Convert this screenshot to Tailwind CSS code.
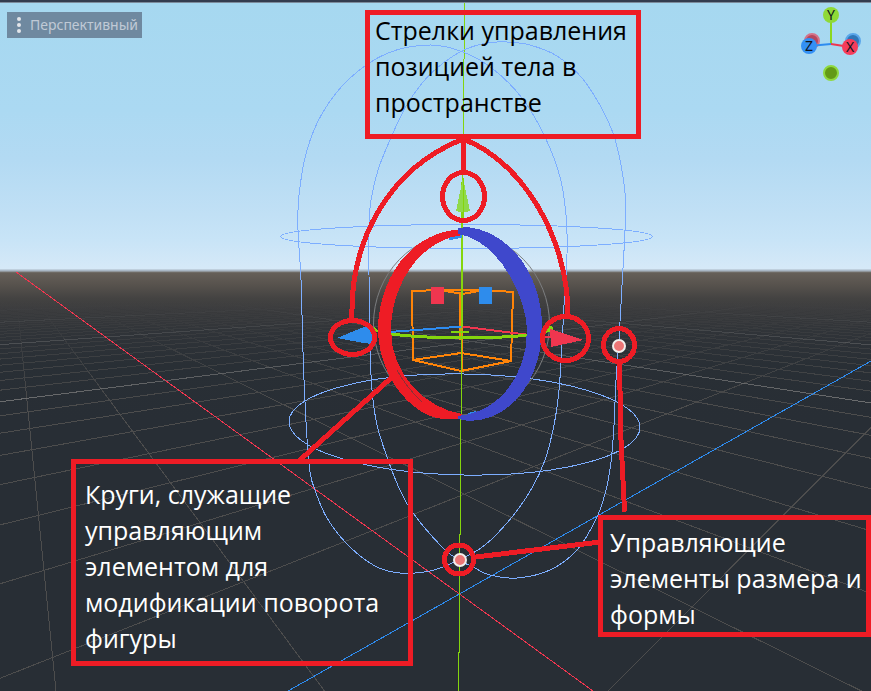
<!DOCTYPE html>
<html lang="ru">
<head>
<meta charset="utf-8">
<title>3D-вид</title>
<script src="https://cdn.jsdelivr.net/npm/@tailwindcss/browser@4"></script>
</head>
<body class="bg-[#282e35]">
<main class="relative min-h-screen w-full overflow-hidden bg-[linear-gradient(to_bottom,#333c4e_0px,#333c4e_2px,#7d8c9c_2px,#7d8c9c_3px,#a6d8f0_3px,#abd9f2_110px,#b3daf3_160px,#c1e0f5_215px,#c8e4f7_240px,#d6e9f8_269px,#a9b7c4_270px,#a9b7c4_271px,#777571_272px,#655f58_273px,#57524d_285px,#444342_298px,#393a3c_311px,#2f3338_335px,#292f35_365px,#282e35_420px)]">
  <svg class="absolute inset-0 h-full w-full" aria-hidden="true" fill="none">
    <defs>
      <linearGradient id="minor" gradientUnits="userSpaceOnUse" x1="0" y1="300" x2="0" y2="410">
        <stop offset="0" stop-color="#4d4d4d" stop-opacity="0"/>
        <stop offset="0.4" stop-color="#4d4d4d" stop-opacity="0.4"/>
        <stop offset="1" stop-color="#4d4d4d"/>
      </linearGradient>
      <linearGradient id="major" gradientUnits="userSpaceOnUse" x1="0" y1="304" x2="0" y2="410">
        <stop offset="0" stop-color="#707172" stop-opacity="0"/>
        <stop offset="0.4" stop-color="#707172" stop-opacity="0.5"/>
        <stop offset="1" stop-color="#707172"/>
      </linearGradient>
    </defs>
    <g shape-rendering="crispEdges">
      <path id="gridMinor" stroke="url(#minor)"/>
      <path id="gridMajor" stroke="url(#major)"/>
      <path d="M16 272L593 691" stroke="#f0364f"/>
      <path d="M871 361L288 691" stroke="#2e8cf0"/>
      <path d="M464.500 3V58L463.500 60V137L462.500 180M460.500 418V534L459.500 535V652L458.500 653V691" stroke="#84d50d"/>
    </g>
    <g stroke="#7daeff" shape-rendering="crispEdges">
      <path data-closed="1" data-points="299,195 307,150 323,112 350,78 388,53 430,45 463,52 493,69 522,98 545,137 560,177 566,215 567,255 564,305 562,345 559,390 554,425 545,460 532,488 512,517 485,545 459,560 430,571 400,573 375,566 348,545 327,518 315,490 309,464 304,380 301,280 298,230"/>
      <path data-closed="1" data-points="369,225 371,200 378,170 390,140 405,108 423,82 442,64 464,50 487,43 507,42 530,45 557,56 582,78 601,107 613,133 620,160 625,193 625,230 622,285 619,340 616,380 614,425 611,462 606,490 597,517 577,550 550,570 517,578 490,575 473,567 459,560 443,548 413,513 400,490 388,460 377,425 372,390 370,347 369,275"/>
      <ellipse cx="466.500" cy="236.500" rx="186" ry="12"/>
      <ellipse cx="464.500" cy="424.500" rx="175.500" ry="50.500" transform="rotate(1 464 424)"/>
    </g>
    <ellipse cx="461.500" cy="324" rx="88" ry="91" stroke="#7c7e80"/>
    <g shape-rendering="crispEdges">
      <g stroke="#ff8408" stroke-width="2">
        <path d="M412 291L440 290L462 294L485 290L513 292L511 361L461 371L413 360ZM440 290H485M413 360L461 353L511 361M462 294V371"/>
        <path d="M461 292V340" stroke-width="4"/>
      </g>
      <path d="M390 332L462 326.500" stroke="#2e8cf0" stroke-width="2"/>
      <path d="M462 326.500L530 335" stroke="#f0364f" stroke-width="2"/>
      <path d="M390 334C430 339 490 339 530 335" stroke="#84d50d" stroke-width="3"/>
      <path d="M451 332H469M374 328L378 332M544 333L552 329" stroke="#84d50d" stroke-width="2"/>
      <circle cx="550" cy="329" r="3" fill="#84d50d"/>
      <path d="M462 182V327" stroke="#84d50d" stroke-width="2"/>
      <path d="M461.500 327V418" stroke="#84d50d"/>
      <path d="M463 178L456 211Q463 213 470 211Z" fill="#90da4a"/>
      <path d="M463 178V222" stroke="#84d50d"/>
      <path d="M337 338L364 327H372V344L364 343Z" fill="#2e8cec"/>
      <path d="M550 329L583 340L551 347Z" fill="#f0364f"/>
      <path d="M544 337H551" stroke="#f0364f" stroke-width="2"/>
      <path d="M431 287h13v17h-13z" fill="#f0364f"/>
      <path d="M479 287h13v17h-13z" fill="#2e8cec"/>
      <path d="M449 239L462 236" stroke="#2e8cec" stroke-width="3"/>
      <path d="M468 414L476 412" stroke="#2e8cec" stroke-width="2"/>
      <path fill="#ee1c25" d="M463 229C405 232 378 285 378 330C379 380 415 419 446 419H462V414C425 408 391 375 391 330C391 285 420 240 462 235Z"/>
      <path fill="#3f48cc" d="M458 228L468 227C510 232 542 275 542 327C542 375 515 421 468 421L458 419V416C500 412 527 375 527 330C527 300 500 240 458 234Z"/>
      <path d="M397 370Q406 387 422 402" stroke="#8e3035"/>
    </g>
    <g stroke="#ee1c25" stroke-width="5" stroke-linecap="round" shape-rendering="crispEdges">
      <path d="M463 139C385 170 350 245 352 318M463 139C520 160 568 235 568 315"/>
      <path d="M463.500 138V172M391 378L300 460M619.500 364L621 440L624.500 510M476 557L600 542"/>
      <ellipse cx="463.500" cy="196.500" rx="21" ry="24"/>
      <ellipse cx="352.500" cy="337.500" rx="22" ry="17"/>
      <ellipse cx="565.500" cy="338.500" rx="23" ry="22"/>
      <ellipse cx="619" cy="345" rx="15.500" ry="16.500"/>
      <ellipse cx="459" cy="559.500" rx="14.500" ry="14.500"/>
    </g>
    <g fill="#ec7676" stroke="#f0eeec" stroke-width="2">
      <circle cx="619" cy="346" r="6"/>
      <circle cx="460" cy="560" r="6"/>
    </g>
    <g stroke-width="2">
      <circle cx="812" cy="41" r="7" fill="#b5475e" stroke="#d57389"/>
      <circle cx="853" cy="41" r="7" fill="#2f76b7" stroke="#5aa6ea"/>
      <path d="M831 44V22" stroke="#8bd81f"/>
      <path d="M831 44L809 46" stroke="#2e8cf0"/>
      <path d="M831 44L850 47" stroke="#f0364f"/>
      <circle cx="831" cy="15" r="8" fill="#8fd937"/>
      <circle cx="809" cy="46" r="8" fill="#3390f5"/>
      <circle cx="850" cy="47" r="8" fill="#f63c5b"/>
      <circle cx="831" cy="73" r="7" fill="#639a16" stroke="#8fd93f"/>
    </g>
    <g fill="#10151b" text-anchor="middle" class="font-['Noto_Sans',sans-serif] text-sm">
      <text x="831" y="20">Y</text>
      <text x="809" y="51">Z</text>
      <text x="850" y="52">X</text>
    </g>
  </svg>

  <button type="button" class="absolute left-[7px] top-3 flex h-[26px] items-center gap-[9px] bg-[#6f89a0] pl-[10px] pr-1 font-['Noto_Sans',sans-serif] text-sm leading-5 text-[#c0cad6]">
    <svg class="h-4 w-1" viewBox="0 0 4 16" fill="#e3e6ea" aria-hidden="true"><circle cx="2" cy="2" r="2"/><circle cx="2" cy="8" r="2"/><circle cx="2" cy="14" r="2"/></svg>
    <span class="w-max">Перспективный</span>
  </button>

  <p class="absolute left-[365px] top-[10px] flex h-[129px] w-[276px] flex-col whitespace-nowrap border-5 border-[#ee1c25] pl-[5px] font-['Open_Sans',sans-serif] text-[25px] leading-9 text-black"><span class="-mt-[3px]">Стрелки управления<br>позицией тела в<br>пространстве</span></p>
  <p class="absolute left-[71px] top-[459px] h-[207px] w-[342px] whitespace-nowrap border-5 border-[#ee1c25] pl-[9px] pt-3 font-['Open_Sans',sans-serif] text-[25px] leading-9 text-white">Круги, служащие<br>управляющим<br>элементом для<br>модификации поворота<br>фигуры</p>
  <p class="absolute left-[598px] top-[515px] h-[122px] w-[273px] whitespace-nowrap border-5 border-[#ee1c25] pl-[7px] pt-1 font-['Open_Sans',sans-serif] text-[25px] leading-9 text-white">Управляющие<br>элементы размера и<br>формы</p>
</main>
<script>
  // Ground grid: two families of lines, each meeting at its own vanishing point.
  const horizon = 271, base = 691;
  const families = [
    { vanish: 14, origin: 593, step: 268.5, from: -3, to: 64 },
    { vanish: 1027, origin: 288, step: -320, from: -2, to: 64 }
  ];
  let minor = '', major = '';
  for (const f of families) {
    for (let k = f.from; k <= f.to; k++) {
      if (k === 0) continue;
      const line = `M${f.vanish} ${horizon}L${f.origin + k * f.step} ${base}`;
      if (k % 8 === 0) major += line; else minor += line;
    }
  }
  document.getElementById('gridMinor').setAttribute('d', minor);
  document.getElementById('gridMajor').setAttribute('d', major);

  // Smooth curves through the listed points.
  document.querySelectorAll('path[data-points]').forEach(path => {
    const p = path.dataset.points.split(' ').map(s => s.split(',').map(Number));
    const n = p.length;
    const at = i => p[(i + n) % n];
    let d = `M${p[0]}`;
    for (let i = 0; i < n; i++) {
      const [a, b, c, e] = [at(i - 1), at(i), at(i + 1), at(i + 2)];
      d += `C${b[0] + (c[0] - a[0]) / 6} ${b[1] + (c[1] - a[1]) / 6} ${c[0] - (e[0] - b[0]) / 6} ${c[1] - (e[1] - b[1]) / 6} ${c[0]} ${c[1]}`;
    }
    path.setAttribute('d', d);
  });
</script>
</body>
</html>
